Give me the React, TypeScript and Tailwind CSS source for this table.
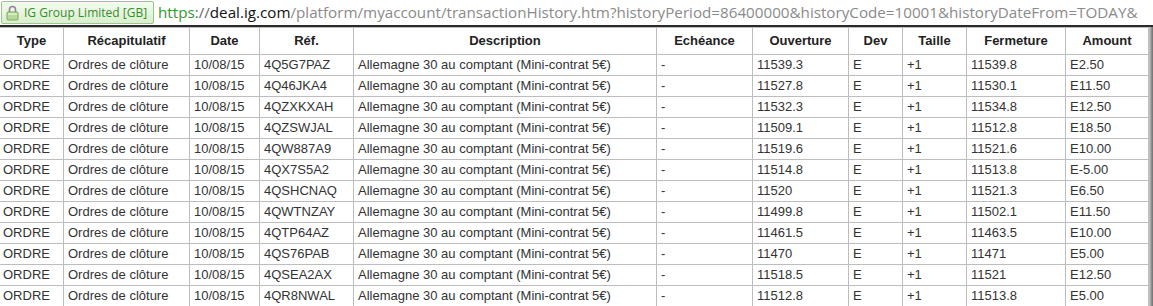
import React from 'react';

const cols = ['Type', 'Récapitulatif', 'Date', 'Réf.', 'Description', 'Echéance', 'Ouverture', 'Dev', 'Taille', 'Fermeture', 'Amount'];

const rows = [
  ['4Q5G7PAZ', '11539.3', '11539.8', 'E2.50'],
  ['4Q46JKA4', '11527.8', '11530.1', 'E11.50'],
  ['4QZXKXAH', '11532.3', '11534.8', 'E12.50'],
  ['4QZSWJAL', '11509.1', '11512.8', 'E18.50'],
  ['4QW887A9', '11519.6', '11521.6', 'E10.00'],
  ['4QX7S5A2', '11514.8', '11513.8', 'E-5.00'],
  ['4QSHCNAQ', '11520', '11521.3', 'E6.50'],
  ['4QWTNZAY', '11499.8', '11502.1', 'E11.50'],
  ['4QTP64AZ', '11461.5', '11463.5', 'E10.00'],
  ['4QS76PAB', '11470', '11471', 'E5.00'],
  ['4QSEA2AX', '11518.5', '11521', 'E12.50'],
  ['4QR8NWAL', '11512.8', '11513.8', 'E5.00'],
];

const grid = 'grid grid-cols-[64px_126px_70px_94px_303px_96px_96px_54px_64px_99px_83px]';

function Lock() {
  return (
    <svg width="13" height="16" viewBox="0 0 13 16" className="shrink-0">
      <path d="M3.5 7V4.5a3 3 0 0 1 6 0V7" fill="none" stroke="#8a8a8a" strokeWidth="1.6" />
      <rect x="1" y="7" width="11" height="8" rx="1" fill="#b8d89a" stroke="#7fa860" />
      <rect x="2" y="8" width="9" height="2" fill="#d9ecc4" />
    </svg>
  );
}

export default function App() {
  return (
    <div className="w-[1153px] h-[306px] overflow-hidden bg-white" style={{ fontFamily: 'Arial' }}>
      <div className="h-[27px] flex items-center gap-[4px] border-b-2 border-[#2a2a2a] pl-px overflow-hidden">
        <div className="w-[153px] shrink-0 h-[23px] flex items-center gap-[5px] px-[4px] rounded-[2px] border border-[#93c98a] bg-gradient-to-b from-[#f4fbef] to-[#d9efcd] text-[#3a8a2c] text-[12px] whitespace-nowrap font-['Open_Sans',sans-serif]">
          <Lock />
          <span>IG Group Limited [GB]</span>
        </div>
        <div className="text-[15.2px] whitespace-nowrap font-['Open_Sans',sans-serif]">
          <span className="text-[#2e9a2a]">https</span>
          <span className="text-[#666]">://</span>
          <span className="text-[#111]">deal.ig.com</span>
          <span className="text-[#8a8a8a]">/platform/myaccount/transactionHistory.htm?historyPeriod=86400000&historyCode=10001&historyDateFrom=TODAY&</span>
        </div>
      </div>
      <div className="flex">
        <div className="w-[1149px] text-[13px] text-[#333] font-['Liberation_Sans',Arial,sans-serif]">
          <div className={`${grid} h-[28px] border-t border-[#bdbdbd]`}>
            {cols.map((c) => (
              <div key={c} className="border-r border-b border-[#bdbdbd] flex items-center justify-center font-bold text-[#222]">
                {c}
              </div>
            ))}
          </div>
          {rows.map((r) => (
            <div key={r[0]} className={`${grid} h-[21px]`}>
              {['ORDRE', 'Ordres de clôture', '10/08/15', r[0], 'Allemagne 30 au comptant (Mini-contrat 5€)', '-', r[1], 'E', '+1', r[2], r[3]].map((v, i) => (
                <div key={i} className={`border-r border-b border-[#bdbdbd] flex items-center whitespace-nowrap ${i === 0 ? 'pl-[3px]' : 'pl-[4px]'}`}>
                  {v}
                </div>
              ))}
            </div>
          ))}
        </div>
        <div className="w-[4px] h-[280px] bg-gradient-to-r from-[#d0d0d0] via-[#9a9a9a] to-[#6f6f6f]" />
      </div>
    </div>
  );
}
